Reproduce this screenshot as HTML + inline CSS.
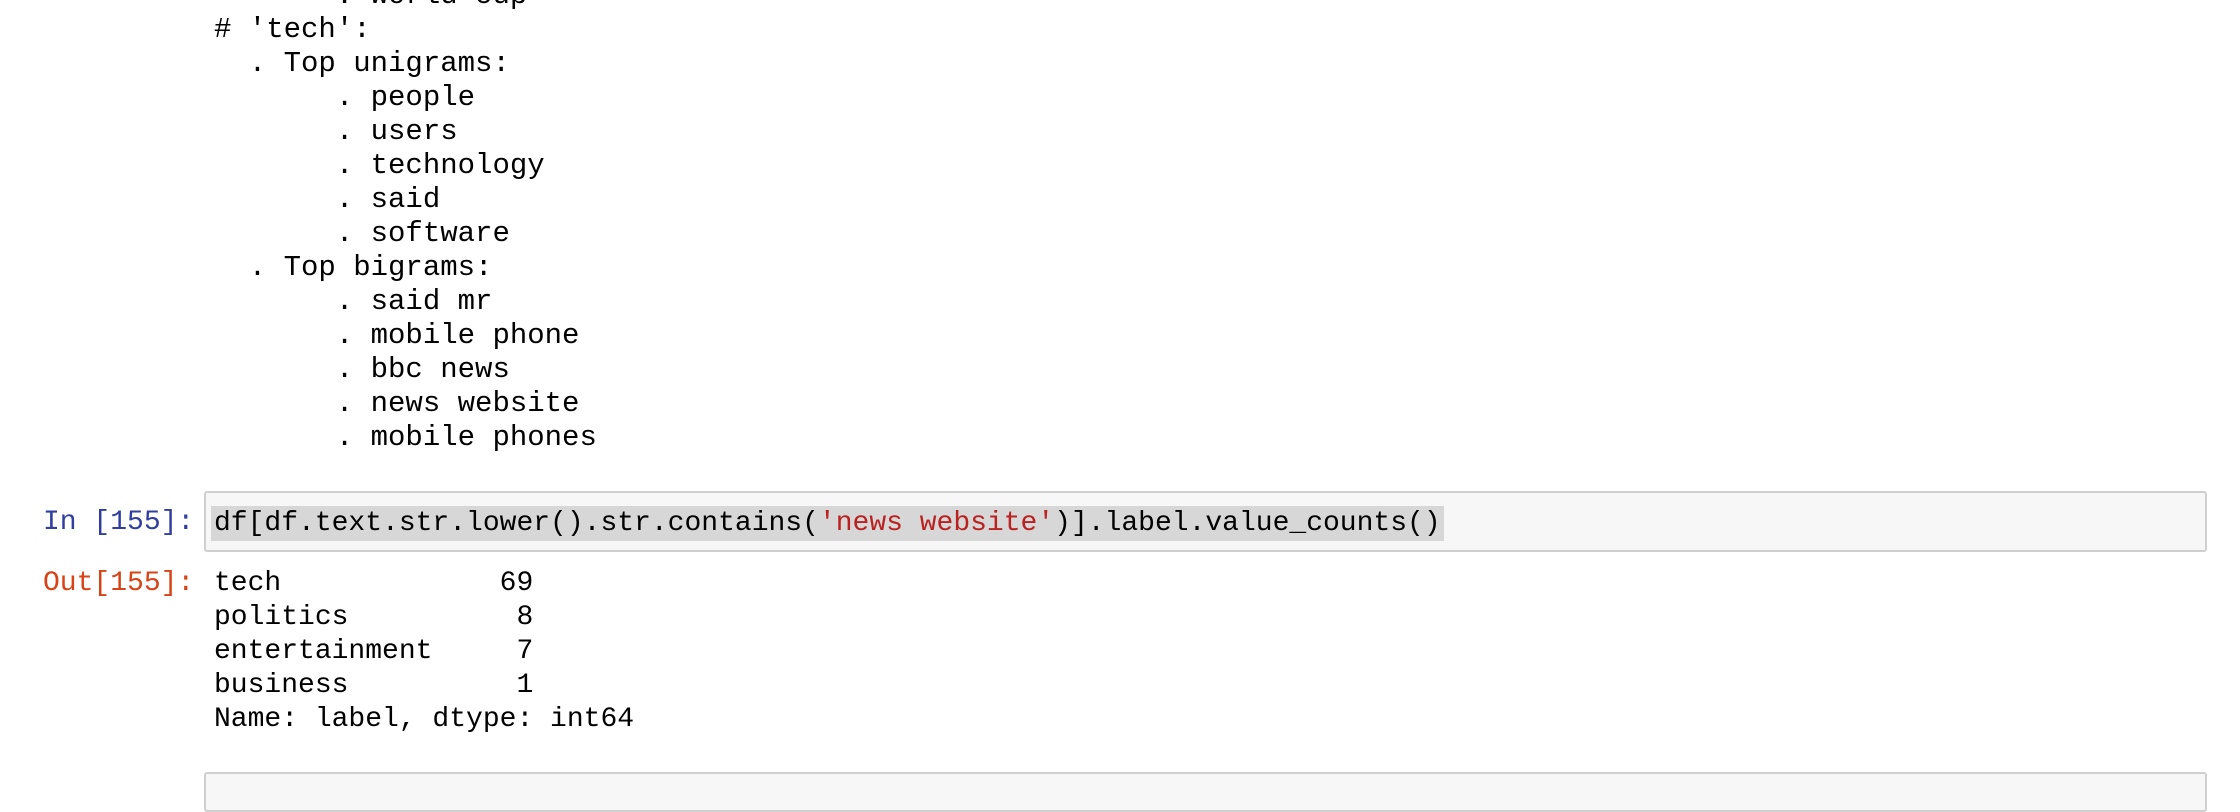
<!DOCTYPE html>
<html><head><style>
body{margin:0;width:2240px;height:780px;background:#fff;position:relative;overflow:hidden;font-family:"Liberation Mono",monospace;}
.top{position:absolute;left:214px;top:-21px;font-size:29px;line-height:34px;white-space:pre;color:#000;margin:0;font-family:"Liberation Mono",monospace;}
.prompt{position:absolute;left:43px;font-size:28px;line-height:34px;white-space:pre;}
.box{position:absolute;left:204px;width:2003px;background:#f7f7f7;border:2px solid #cfcfcf;border-radius:3px;box-sizing:border-box;}
.code{position:absolute;left:211px;top:506px;height:35px;background:#d7d7d7;font-size:28px;line-height:35px;white-space:pre;padding:0 3px;}
.out{position:absolute;left:214px;top:567px;font-size:28px;line-height:34px;white-space:pre;margin:0;font-family:"Liberation Mono",monospace;}
</style></head><body>
<pre class="top">       . world cup
# 'tech':
  . Top unigrams:
       . people
       . users
       . technology
       . said
       . software
  . Top bigrams:
       . said mr
       . mobile phone
       . bbc news
       . news website
       . mobile phones</pre>
<div class="box" style="top:491px;height:61px;"></div>
<div class="prompt" style="top:506px;color:#303f9f;">In [155]:</div>
<div class="code">df[df.text.str.lower().str.contains(<span style="color:#ba2121">'news website'</span>)].label.value_counts()</div>
<div class="prompt" style="top:567px;color:#d84315;">Out[155]:</div>
<pre class="out">tech             69
politics          8
entertainment     7
business          1
Name: label, dtype: int64</pre>
<div class="box" style="top:772px;height:40px;"></div>
</body></html>
